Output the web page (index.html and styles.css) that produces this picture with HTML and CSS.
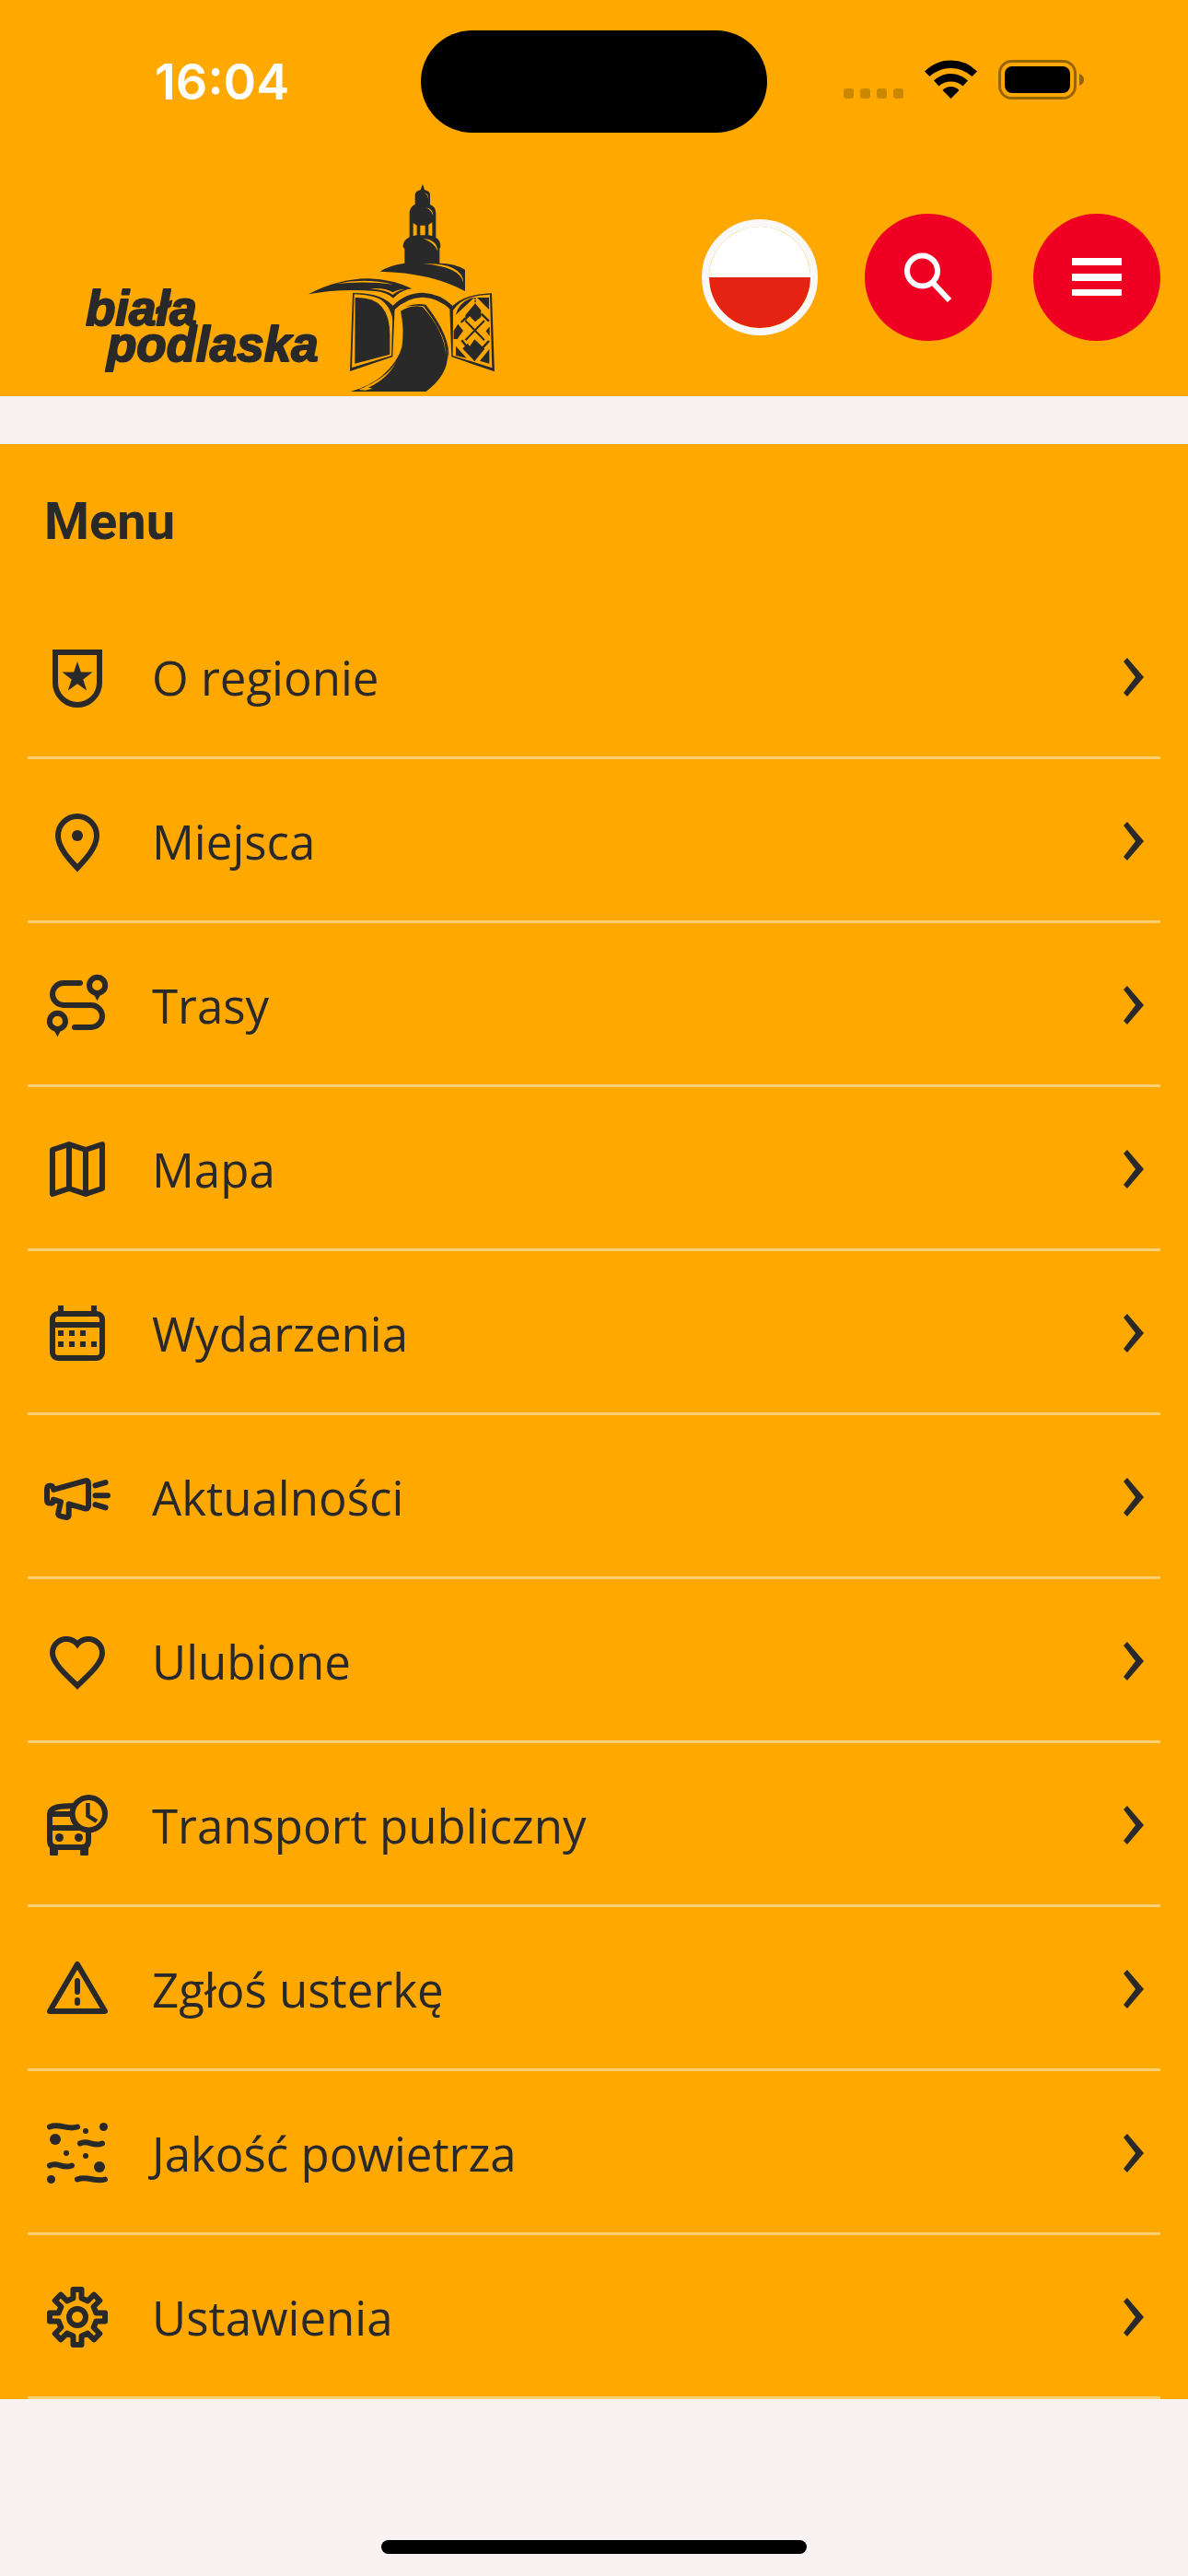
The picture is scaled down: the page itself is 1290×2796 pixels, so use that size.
FILE: index.html
```html
<!DOCTYPE html>
<html lang="pl">
<head>
  <meta charset="UTF-8">
  <meta name="viewport" content="width=device-width, initial-scale=1.0">
  <title>Biała Podlaska - Menu</title>
  <link rel="stylesheet" href="styles.css">
</head>
<body>
  <header class="header">
    <div class="status-bar">
      <span class="status-time">16:04</span>
      <div class="status-island"></div>
      <div class="status-icons">
        <svg width="65" height="43" viewBox="0 0 65 43" fill="#cc8700">
          <rect x="0" y="31" width="11" height="11" rx="3"/>
          <rect x="18" y="31" width="11" height="11" rx="3"/>
          <rect x="36" y="31" width="11" height="11" rx="3"/>
          <rect x="54" y="31" width="11" height="11" rx="3"/>
        </svg>
        <svg width="57" height="43" viewBox="0 0 57 43">
          <path d="M0 12.500Q12 .5 28.500 .5T57 12.500L51.500 18Q41 9 28.500 9T5.500 18z"/>
          <path d="M10 22.500Q18 15 28.500 15T47 22.500L41.500 28.500Q36 23.500 28.500 23.500T15.500 28.500z"/>
          <path d="M19.500 33Q23.500 29 28.500 29T37.500 33L28.500 42z"/>
        </svg>
        <svg width="93" height="43" viewBox="0 0 93 43">
          <rect x="1.500" y="1.500" width="82" height="40" rx="13" fill="none" stroke="#996500" stroke-width="3"/>
          <rect x="7" y="7" width="71" height="29" rx="8"/>
          <path d="M88 15q5 2 5 6.500t-5 6.500z" fill="#996500"/>
        </svg>
      </div>
    </div>

    <div class="top-bar">
      <a class="logo" href="#" aria-label="Biała Podlaska">
        <svg width="470" height="240" viewBox="0 0 470 240" fill="#292929">
          <text class="logo-text" x="13" y="163">biała</text>
          <text class="logo-text" x="36" y="202">podlaska</text>
          <g transform="translate(250 0) scale(.3333)">
            <!-- tower -->
            <path fill-rule="evenodd" d="M387 29L393 48Q411 53 411 63V96Q430 103 430 125V204Q445 212 445 234L442 240V287Q490 287 525 308V378Q415 318 248 314Q275 295 328 287V240L323 234Q323 212 344 202V120Q346 103 362 96V63Q363 53 380 48zM356 156V198L368 196V164zM379 164V196H395V164zM406 162V196L418 198V154z"/>
            <path d="M394 58Q406 62 406 77Q403 65 394 58zM398 106Q420 110 421 132Q414 114 398 106zM390 208Q433 210 436 248Q425 219 390 208zM390 289Q515 286 520 350Q506 298 390 289z" fill="#ffa800"/>
            <!-- roof -->
            <path d="M15 388Q110 338 210 337Q290 340 352 370L336 373Q312 380 291 401Q270 382 234 378Q115 369 15 388z"/>
            <path d="M104 354Q200 334 292 356Q200 344 104 354zM215 370Q268 374 290 390Q303 376 328 372Q303 373 290 382Q264 366 215 370z" fill="#ffa800"/>
            <path d="M290 425Q332 383 387 383Q442 385 484 425L480 440Q438 399 387 398Q335 399 295 439z"/>
            <!-- left door -->
            <path fill-rule="evenodd" d="M159 384Q260 383 296 433L289 592L150 639zM164 388L156 627L285 588L290 438Q258 390 164 388z"/>
            <path d="M167 399Q280 394 280 520V584L166 614z"/>
            <path d="M159 384Q262 390 293 437L291 480Q284 423 240 399Q205 388 159 384z"/>
            <!-- road -->
            <path d="M315 443Q352 420 389 428Q465 515 468 585Q470 650 398 705H152Q214 688 254 655Q308 606 319 560Q328 500 315 443z"/>
            <path d="M178 699Q273 660 302 606Q275 662 210 692L224 695L200 701zM345 430Q374 420 392 424Q464 514 461 584Q459 510 387 430Q366 424 345 430z" fill="#ffa800"/>
            <path d="M330 428Q365 416 397 422Q482 530 470 600Q469 530 390 427Q365 423 330 428z"/>
            <!-- right door -->
            <path fill-rule="evenodd" d="M612 385L621 640L481 592L475 437Q510 388 612 385zM606 389Q518 391 486 440L485 588L613 628z"/>
            <path d="M556 398Q507 408 494 456zM564 399H603V438zM495 557L530 596L495 588zM604 567V614L573 605z"/>
            <path d="M558 418L577 440V462L558 478L540 460L526 474V456zM488 507L502 485L519 507L500 534H488zM605 493V525L593 508zM556 535L589 566L556 606L517 565L534 548L540 558z"/>
            <path d="M526 474L588 538M588 474L526 538" fill="none" stroke="#292929" stroke-width="6"/>
            <path d="M526 466L512 480M578 452L603 476M514 538L530 558M582 563L603 540" fill="none" stroke="#292929" stroke-width="7"/>
            <path d="M558 400V418M556 588V606" fill="none" stroke="#292929" stroke-width="5" stroke-dasharray="5 3"/>
          </g>
        </svg>
      </a>
      <nav class="top-actions">
        <button class="lang-button" aria-label="Język polski"></button>
        <button class="round-button" aria-label="Szukaj">
          <svg width="52" height="54" viewBox="0 0 52 54" fill="none" stroke="#fff">
            <circle cx="19.500" cy="20" r="16.500" stroke-width="6"/>
            <path d="M32 34L49 52" stroke-width="6"/>
          </svg>
        </button>
        <button class="round-button" aria-label="Zamknij menu">
          <svg width="54" height="42" viewBox="0 0 54 42" fill="#fff">
            <path d="M0 0h54v8H0zM0 17h54v8H0zM0 34h54v7H0z"/>
          </svg>
        </button>
      </nav>
    </div>
  </header>

  <main class="menu">
    <h1 class="menu-title">Menu</h1>
    <ul class="menu-list">
      <li>
        <a class="menu-item" href="#">
          <svg class="icon" viewBox="0 0 24 24"><path d="M4 3h16v11a8 8 0 0 1-16 0z"/><path class="solid" d="M12 6.300l1.300 3.900h4.200l-3.400 2.600 1.300 4-3.400-2.400-3.400 2.400 1.300-4-3.400-2.600h4.200z"/></svg>
          <span class="menu-label">O regionie</span>
          <svg class="chevron" viewBox="0 0 22 42"><path d="M4 0l18 21L4 42l-4-4 13-17L0 4z"/></svg>
        </a>
      </li>
      <li>
        <a class="menu-item" href="#">
          <svg class="icon" viewBox="0 0 24 24"><path d="M12 21.700C9.500 19 5 14.500 5 10a7 7 0 0 1 14 0c0 4.500-4.500 9-7 11.700z"/><circle class="solid" cx="12" cy="10" r="2"/></svg>
          <span class="menu-label">Miejsca</span>
          <svg class="chevron" viewBox="0 0 22 42"><path d="M4 0l18 21L4 42l-4-4 13-17L0 4z"/></svg>
        </a>
      </li>
      <li>
        <a class="menu-item" href="#">
          <svg class="icon round" viewBox="0 0 24 24"><path d="M13 4H7a4 4 0 0 0 0 8h10a4 4 0 0 1 0 8h-6"/><circle cx="19.200" cy="4.800" r="2.850"/><circle cx="4.800" cy="17.800" r="2.850"/><path class="solid" d="M17.800 7.800h2.800l-1.400 2.600zM3.400 20.800h2.800l-1.400 2.600z"/></svg>
          <span class="menu-label">Trasy</span>
          <svg class="chevron" viewBox="0 0 22 42"><path d="M4 0l18 21L4 42l-4-4 13-17L0 4z"/></svg>
        </a>
      </li>
      <li>
        <a class="menu-item" href="#">
          <svg class="icon round" viewBox="0 0 24 24"><path d="M3 5l6-2 6 2 6-2v16l-6 2-6-2-6 2zM9 3v16M15 5v16"/></svg>
          <span class="menu-label">Mapa</span>
          <svg class="chevron" viewBox="0 0 22 42"><path d="M4 0l18 21L4 42l-4-4 13-17L0 4z"/></svg>
        </a>
      </li>
      <li>
        <a class="menu-item" href="#">
          <svg class="icon" viewBox="0 0 24 24"><rect x="3" y="5" width="18" height="16" rx="2"/><path d="M3 9h18M6 2v3M18 2v3"/><path class="solid" d="M5 11h2v2H5zM9 11h2v2H9zM13 11h2v2h-2zM5 15h2v2H5zM9 15h2v2H9zM13 15h2v2h-2zM17 15h2v2h-2z"/></svg>
          <span class="menu-label">Wydarzenia</span>
          <svg class="chevron" viewBox="0 0 22 42"><path d="M4 0l18 21L4 42l-4-4 13-17L0 4z"/></svg>
        </a>
      </li>
      <li>
        <a class="menu-item" href="#">
          <svg class="icon round" viewBox="0 0 24 24"><path d="M3.400 9.300L14.700 6.100Q16 5.800 16 7v8.200q0 1.200-1.300.9L8.900 14.500V18.300q0 1.200-1.200 1L6 18.900q-1.100-.3-.9-1.300L6 13.700l-2.700-.8v.6q-.1.700-1.200.7Q1 14.200 1 13V9.100q0-1.300 1.200-1.300 1 0 1.200 1.500z"/><path d="M18.500 7.800l3.700-1.100M18.500 11.400H23M18.500 14.700l3.700 1.100"/></svg>
          <span class="menu-label">Aktualności</span>
          <svg class="chevron" viewBox="0 0 22 42"><path d="M4 0l18 21L4 42l-4-4 13-17L0 4z"/></svg>
        </a>
      </li>
      <li>
        <a class="menu-item" href="#">
          <svg class="icon" viewBox="0 0 24 24"><path d="M12 20.900C8.500 17.400 3 13 3 9a5 5 0 0 1 5-5c1.600 0 3 .7 4 1.900C13 4.700 14.400 4 16 4a5 5 0 0 1 5 5c0 4-5.500 8.400-9 11.900z"/></svg>
          <span class="menu-label">Ulubione</span>
          <svg class="chevron" viewBox="0 0 22 42"><path d="M4 0l18 21L4 42l-4-4 13-17L0 4z"/></svg>
        </a>
      </li>
      <li>
        <a class="menu-item" href="#">
          <svg class="icon" viewBox="0 0 24 24"><circle cx="16.100" cy="7.900" r="5.900"/><path d="M10.700 5C6 5 2 5.300 2 8v9.500Q2 20 4.500 20h9q2.500 0 2.500-2.500V14M2 8h8.200M2 13h11"/><path d="M15.800 4v4.600l3.200 2" stroke-width="1.500"/><circle class="solid" cx="5.500" cy="16.500" r="1.500"/><circle class="solid" cx="12.500" cy="16.500" r="1.500"/><path class="solid" d="M2 20h3v2.500q0 .5-.5.500h-2q-.5 0-.5-.5zM13 20h3v2.500q0 .5-.5.500h-2q-.5 0-.5-.5z"/></svg>
          <span class="menu-label">Transport publiczny</span>
          <svg class="chevron" viewBox="0 0 22 42"><path d="M4 0l18 21L4 42l-4-4 13-17L0 4z"/></svg>
        </a>
      </li>
      <li>
        <a class="menu-item" href="#">
          <svg class="icon round" viewBox="0 0 24 24"><path d="M12 3l10 17H2zM12 9v4M12 16v1"/></svg>
          <span class="menu-label">Zgłoś usterkę</span>
          <svg class="chevron" viewBox="0 0 22 42"><path d="M4 0l18 21L4 42l-4-4 13-17L0 4z"/></svg>
        </a>
      </li>
      <li>
        <a class="menu-item" href="#">
          <svg class="icon round" viewBox="0 0 24 24"><path d="M2 2.500c3.500-1.500 6.500 1.300 10 0M13 8.500c3-1.600 4.500 1.500 8 0M2 16.500c3-1.600 4.500 1.500 8 0M12 21.500c3.500-1.500 6.500 1.200 10 0"/><g class="solid"><circle cx="15" cy="4" r="1"/><circle cx="21.500" cy="2.500" r="1.500"/><circle cx="4" cy="7" r="2"/><circle cx="8" cy="12" r="1"/><circle cx="15" cy="13" r="1"/><circle cx="20" cy="17" r="2"/><circle cx="2.500" cy="21.500" r="1.500"/></g></svg>
          <span class="menu-label">Jakość powietrza</span>
          <svg class="chevron" viewBox="0 0 22 42"><path d="M4 0l18 21L4 42l-4-4 13-17L0 4z"/></svg>
        </a>
      </li>
      <li>
        <a class="menu-item" href="#">
          <svg class="icon round" viewBox="0 0 24 24"><path d="M10.500 2H13.500V5.200L15.750 6.130 18 3.900 20.100 6 17.870 8.250 18.800 10.500H22V13.500H18.800L17.870 15.750 20.100 18 18 20.100 15.750 17.870 13.500 18.800V22H10.500V18.800L8.250 17.870 6 20.100 3.900 18 6.130 15.750 5.200 13.500H2V10.500H5.200L6.130 8.250 3.900 6 6 3.900 8.250 6.130 10.500 5.200z"/><circle cx="12" cy="12" r="3"/></svg>
          <span class="menu-label">Ustawienia</span>
          <svg class="chevron" viewBox="0 0 22 42"><path d="M4 0l18 21L4 42l-4-4 13-17L0 4z"/></svg>
        </a>
      </li>
    </ul>
  </main>

  <footer class="footer">
    <div class="home-indicator"></div>
  </footer>
</body>
</html>
```

FILE: styles.css
```css
* {
  box-sizing: border-box;
}

body {
  display: flex;
  flex-direction: column;
  min-height: 100vh;
  margin: 0;
  font-family: "Open Sans", "Noto Sans", sans-serif;
  color: #292929;
  background-color: #f8f2f2;
}

svg {
  display: block;
}

/* header */
.header {
  background-color: #ffa800;
}

.status-bar {
  display: grid;
  grid-template-columns: 1fr auto 1fr;
  align-items: center;
  padding: 33px 113px 28px;
}

.status-time {
  padding-left: 55px;
  font-family: Inter, sans-serif;
  font-size: 54px;
  font-weight: 600;
  line-height: 60px;
  color: #fff;
}

.status-island {
  width: 376px;
  height: 111px;
  border-radius: 56px;
  background-color: #000;
}

.status-icons {
  display: flex;
  justify-content: flex-end;
  gap: 23px;
  padding-bottom: 4px;
}

.top-bar {
  display: flex;
  align-items: center;
  justify-content: space-between;
  padding: 0 30px 0 80px;
  min-height: 258px;
}

.logo {
  align-self: flex-end;
}

.logo-text {
  font-family: "Liberation Sans", Arial, sans-serif;
  font-size: 53px;
  font-style: italic;
  font-weight: 700;
  stroke: #292929;
  stroke-width: 2px;
  stroke-linejoin: round;
}

.top-actions {
  display: flex;
  align-items: center;
  gap: 45px;
}

.lang-button {
  width: 126px;
  height: 126px;
  margin: 0 6px;
  padding: 0;
  border: 8px solid #f8f8f8;
  border-radius: 50%;
  background: linear-gradient(#fff 50%, #e42313 50%) padding-box;
  cursor: pointer;
}

.round-button {
  display: flex;
  align-items: center;
  justify-content: center;
  width: 138px;
  height: 138px;
  padding: 0;
  border: none;
  border-radius: 50%;
  background-color: #ef0022;
  cursor: pointer;
}

/* menu */
.menu {
  margin-top: 52px;
  padding: 0 30px;
  background-color: #ffa800;
}

.menu-title {
  margin: 0;
  padding: 48px 18px 44px;
  font-family: Roboto, sans-serif;
  font-size: 56px;
  font-weight: 700;
  line-height: 72px;
}

.menu-list {
  margin: 0;
  padding: 0;
  list-style-type: none;
}

.menu-item {
  display: flex;
  align-items: center;
  gap: 45px;
  height: 178px;
  padding: 0 18px;
  color: inherit;
  text-decoration: none;
  box-shadow: inset 0 -3px #fccf73;
}

.menu-label {
  flex: 1;
  font-size: 51px;
  line-height: 72px;
}

.icon {
  width: 72px;
  height: 72px;
  fill: none;
  stroke: #292929;
  stroke-width: 2;
}

.icon.round {
  stroke-linecap: round;
  stroke-linejoin: round;
}

.icon .solid {
  fill: #292929;
  stroke: none;
}

.chevron {
  width: 22px;
  height: 42px;
  fill: #292929;
}

/* bottom */
.footer {
  display: flex;
  justify-content: center;
  margin-top: auto;
  padding: 24px;
}

.home-indicator {
  width: 462px;
  height: 15px;
  border-radius: 8px;
  background-color: #000;
}
```
